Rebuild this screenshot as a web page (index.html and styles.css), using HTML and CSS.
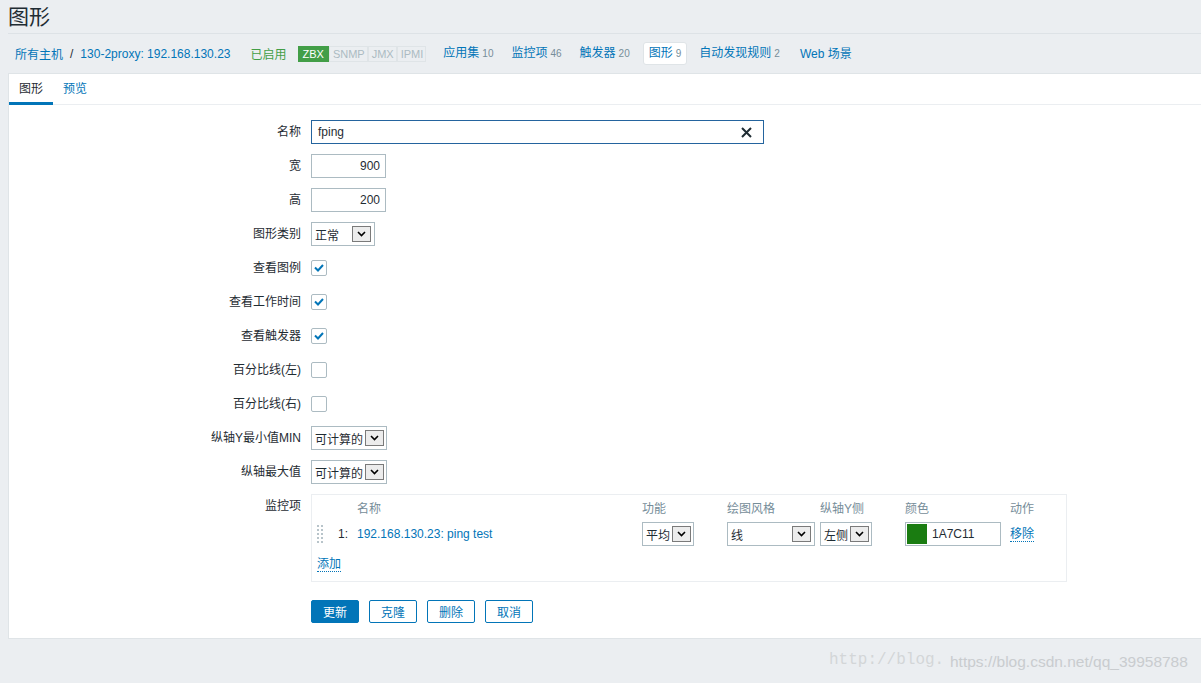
FILE: index.html
```html
<!DOCTYPE html>
<html lang="zh-CN">
<head>
<meta charset="utf-8">
<title>图形</title>
<link rel="stylesheet" href="styles.css">
</head>
<body>
<div class="page">
  <header class="top"><h1 class="title">图形</h1></header>
  <nav class="navbar">
    <a class="crumb">所有主机</a><span class="sep">/</span><a class="crumb">130-2proxy: 192.168.130.23</a>
    <span class="status">已启用</span>
    <span class="badges"><span class="badge on">ZBX</span><span class="badge">SNMP</span><span class="badge">JMX</span><span class="badge">IPMI</span></span>
    <a class="nav-item">应用集<span class="cnt">10</span></a>
    <a class="nav-item">监控项<span class="cnt">46</span></a>
    <a class="nav-item">触发器<span class="cnt">20</span></a>
    <a class="nav-item selected">图形<span class="cnt">9</span></a>
    <a class="nav-item">自动发现规则<span class="cnt">2</span></a>
    <a class="nav-item web">Web 场景</a>
  </nav>

  <div class="panel">
    <ul class="tabs">
      <li class="tab active">图形</li>
      <li class="tab">预览</li>
    </ul>
    <div class="form">
      <div class="row">
        <label class="lbl">名称</label>
        <div class="field">
          <div class="text-input name-input"><span>fping</span>
            <svg class="clear" width="11" height="11" viewBox="0 0 11 11"><path d="M1 1L10 10M10 1L1 10" stroke="#1f2c33" stroke-width="2"/></svg>
          </div>
        </div>
      </div>
      <div class="row">
        <label class="lbl">宽</label>
        <div class="field"><div class="text-input num-input">900</div></div>
      </div>
      <div class="row">
        <label class="lbl">高</label>
        <div class="field"><div class="text-input num-input">200</div></div>
      </div>
      <div class="row">
        <label class="lbl">图形类别</label>
        <div class="field"><div class="select w64"><span>正常</span><span class="arrow"><svg width="9" height="6" viewBox="0 0 9 6"><path d="M1 1L4.5 4.5L8 1" fill="none" stroke="#000" stroke-width="1.6"/></svg></span></div></div>
      </div>
      <div class="row">
        <label class="lbl">查看图例</label>
        <div class="field"><span class="checkbox"><svg width="10" height="8" viewBox="0 0 10 8"><path d="M1 3.5L4 6.5L9 1" fill="none" stroke="#0275b8" stroke-width="2"/></svg></span></div>
      </div>
      <div class="row">
        <label class="lbl">查看工作时间</label>
        <div class="field"><span class="checkbox"><svg width="10" height="8" viewBox="0 0 10 8"><path d="M1 3.5L4 6.5L9 1" fill="none" stroke="#0275b8" stroke-width="2"/></svg></span></div>
      </div>
      <div class="row">
        <label class="lbl">查看触发器</label>
        <div class="field"><span class="checkbox"><svg width="10" height="8" viewBox="0 0 10 8"><path d="M1 3.5L4 6.5L9 1" fill="none" stroke="#0275b8" stroke-width="2"/></svg></span></div>
      </div>
      <div class="row">
        <label class="lbl">百分比线(左)</label>
        <div class="field"><span class="checkbox"></span></div>
      </div>
      <div class="row">
        <label class="lbl">百分比线(右)</label>
        <div class="field"><span class="checkbox"></span></div>
      </div>
      <div class="row">
        <label class="lbl">纵轴Y最小值MIN</label>
        <div class="field"><div class="select w76"><span>可计算的</span><span class="arrow"><svg width="9" height="6" viewBox="0 0 9 6"><path d="M1 1L4.5 4.5L8 1" fill="none" stroke="#000" stroke-width="1.6"/></svg></span></div></div>
      </div>
      <div class="row">
        <label class="lbl">纵轴最大值</label>
        <div class="field"><div class="select w76"><span>可计算的</span><span class="arrow"><svg width="9" height="6" viewBox="0 0 9 6"><path d="M1 1L4.5 4.5L8 1" fill="none" stroke="#000" stroke-width="1.6"/></svg></span></div></div>
      </div>
      <div class="row">
        <label class="lbl">监控项</label>
        <div class="field">
          <div class="items">
            <div class="items-grid head">
              <span></span><span></span><span>名称</span><span>功能</span><span>绘图风格</span><span>纵轴Y侧</span><span>颜色</span><span>动作</span>
            </div>
            <div class="items-grid item-row">
              <span class="handle"><svg width="6" height="18" viewBox="0 0 6 18"><g fill="#b8c4ca"><rect x="0" y="0" width="2" height="2"/><rect x="4" y="0" width="2" height="2"/><rect x="0" y="4" width="2" height="2"/><rect x="4" y="4" width="2" height="2"/><rect x="0" y="8" width="2" height="2"/><rect x="4" y="8" width="2" height="2"/><rect x="0" y="12" width="2" height="2"/><rect x="4" y="12" width="2" height="2"/><rect x="0" y="16" width="2" height="2"/><rect x="4" y="16" width="2" height="2"/></g></svg></span>
              <span class="num">1:</span>
              <a class="link">192.168.130.23: ping test</a>
              <div class="select w52"><span>平均</span><span class="arrow"><svg width="9" height="6" viewBox="0 0 9 6"><path d="M1 1L4.5 4.5L8 1" fill="none" stroke="#000" stroke-width="1.6"/></svg></span></div>
              <div class="select w88"><span>线</span><span class="arrow"><svg width="9" height="6" viewBox="0 0 9 6"><path d="M1 1L4.5 4.5L8 1" fill="none" stroke="#000" stroke-width="1.6"/></svg></span></div>
              <div class="select w52"><span>左侧</span><span class="arrow"><svg width="9" height="6" viewBox="0 0 9 6"><path d="M1 1L4.5 4.5L8 1" fill="none" stroke="#000" stroke-width="1.6"/></svg></span></div>
              <div class="color-input"><span class="swatch"></span><span>1A7C11</span></div>
              <a class="dotted">移除</a>
            </div>
            <div class="add-row"><a class="dotted">添加</a></div>
          </div>
        </div>
      </div>
      <div class="row buttons-row">
        <span></span>
        <div class="buttons">
          <button class="btn primary">更新</button>
          <button class="btn">克隆</button>
          <button class="btn">删除</button>
          <button class="btn">取消</button>
        </div>
      </div>
    </div>
  </div>
</div>
<div class="watermark"><span class="wm1">http://blog.</span><span class="wm2">https://blog.csdn.net/qq_39958788</span></div>
</body>
</html>
```

FILE: styles.css
```css
html, body {
  margin: 0;
  padding: 0;
}
body {
  background: #ebeef1;
  color: #1f2c33;
  font-family: "Liberation Sans", Arial, "Noto Sans CJK SC", sans-serif;
  font-size: 12px;
  width: 1201px;
  height: 683px;
  overflow: hidden;
  position: relative;
}
a { color: #0275b8; text-decoration: none; }

.page { padding-left: 8px; }

.top {
  border-bottom: 1px solid #dde2e6;
}
.title {
  margin: 0;
  font-size: 21px;
  font-weight: normal;
  line-height: 33px;
  color: #1f2c33;
}

.navbar {
  height: 39px;
  display: flex;
  align-items: center;
  white-space: nowrap;
}
.crumb:first-child { margin-left: 7px; }
.sep { margin: 0 7px; color: #1f2c33; }
.status { color: #429e47; margin-left: 20px; }
.badges { display: flex; margin-left: 11px; margin-right: 6px; }
.badge {
  font-size: 11px;
  line-height: 14px;
  padding: 0 2px 0 3px;
  border: 1px solid #dfe4e7;
  background: #ebeef1;
  color: #acbbc2;
}
.badge.on {
  background: #429e47;
  border-color: #429e47;
  color: #fff;
  padding: 0 4px;
}
.nav-item {
  padding: 3px 6px;
  margin-left: 4px;
  line-height: 14px;
  border: 1px solid transparent;
  border-radius: 3px;
}
.nav-item.selected {
  background: #fff;
  border-color: #dfe4e7;
  padding: 3px 5px;
  margin-left: 6px;
  margin-right: 1px;
}
.nav-item.web { margin-left: 6px; }
.cnt {
  color: #768d99;
  font-size: 10px;
  margin-left: 3px;
}

.panel {
  background: #fff;
  border: 1px solid #dfe4e7;
  border-right: none;
  padding-bottom: 15px;
}
.tabs {
  list-style: none;
  margin: 0;
  padding: 0;
  display: flex;
  border-bottom: 1px solid #ebeef1;
}
.tab {
  padding: 2px 10px 0;
  line-height: 26px;
  border-bottom: 3px solid transparent;
  margin-bottom: -1px;
  color: #0275b8;
}
.tab.active {
  color: #1f2c33;
  border-bottom-color: #0275b8;
}

.form { padding-top: 15px; }
.row {
  display: grid;
  grid-template-columns: 292px 1fr;
  column-gap: 10px;
  margin-bottom: 10px;
}
.lbl {
  text-align: right;
  line-height: 24px;
}
.field {
  display: flex;
  align-items: center;
  min-height: 24px;
}

.text-input {
  box-sizing: border-box;
  height: 24px;
  border: 1px solid #acbbc2;
  line-height: 22px;
  display: flex;
  align-items: center;
}
.name-input {
  width: 453px;
  border-color: #24649e;
  padding: 0 11px 0 6px;
  justify-content: space-between;
}
.num-input {
  width: 75px;
  justify-content: flex-end;
  padding-right: 5px;
}

.select {
  box-sizing: border-box;
  height: 24px;
  border: 1px solid #acbbc2;
  display: flex;
  align-items: center;
  padding-left: 3px;
  padding-right: 3px;
  background: #fff;
}
.select .arrow {
  margin-left: auto;
  box-sizing: border-box;
  width: 19px;
  height: 16px;
  border: 1px solid #7a7a7a;
  background: #ececec;
  display: flex;
  align-items: center;
  justify-content: center;
}
.w52 { width: 52px; padding-right: 2px; }
.w64 { width: 64px; }
.w76 { width: 76px; padding-right: 2px; }
.w88 { width: 88px; }

.checkbox {
  box-sizing: border-box;
  width: 16px;
  height: 16px;
  border: 1px solid #acbbc2;
  border-radius: 2px;
  display: flex;
  align-items: center;
  justify-content: center;
}

.items {
  box-sizing: border-box;
  width: 756px;
  border: 1px solid #ebeef1;
  padding: 5px 0 9px 5px;
}
.items-grid {
  display: grid;
  grid-template-columns: 21px 19px 285px 85px 93px 85px 105px auto;
  align-items: center;
}
.head {
  line-height: 18px;
  color: #768d99;
}
.item-row {
  margin-top: 4px;
  height: 24px;
}
.handle { display: flex; align-items: center; }
.num { color: #1f2c33; }
.color-input {
  box-sizing: border-box;
  width: 96px;
  height: 24px;
  border: 1px solid #acbbc2;
  display: flex;
  align-items: center;
  padding-left: 1px;
}
.swatch {
  width: 20px;
  height: 20px;
  background: #1a7c11;
  margin-right: 5px;
}
.dotted {
  border-bottom: 1px dotted #0275b8;
  line-height: 14px;
  justify-self: start;
}
.add-row {
  padding-top: 11px;
  line-height: 16px;
  display: flex;
}

.buttons-row { margin-top: 17px; margin-bottom: 0; }
.buttons { display: flex; gap: 10px; padding-top: 1px; }
.btn {
  box-sizing: border-box;
  width: 48px;
  height: 23px;
  border: 1px solid #0275b8;
  border-radius: 2px;
  background: #fff;
  color: #0275b8;
  font-family: "Liberation Sans", Arial, "Noto Sans CJK SC", sans-serif;
  font-size: 12px;
  padding: 0;
}
.btn.primary {
  background: #0275b8;
  color: #fff;
}

.watermark {
  position: absolute;
  left: 829px;
  top: 651px;
  white-space: nowrap;
  color: #d3d6d8;
}
.wm1 {
  font-family: "Liberation Mono", monospace;
  font-size: 16px;
}
.wm2 {
  position: absolute;
  left: 121px;
  top: 2px;
  font-family: "Liberation Sans", sans-serif;
  font-size: 15.5px;
  color: #c9cccf;
}
```
